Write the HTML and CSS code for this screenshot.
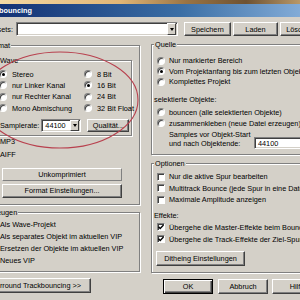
FILE: index.html
```html
<!DOCTYPE html>
<html lang="de">
<head>
    <meta charset="utf-8">
    <meta name="viewport" content="width=device-width, initial-scale=1.0">
    <link rel="stylesheet" href="styles.css">
    <title>Trackbouncing</title>
</head>
<body>
    <div class="desk"></div>
    <div class="window">
        <div class="titlebar"><span class="title">Trackbouncing</span></div>
        <div class="content">

            <!-- preset row -->
            <div class="presets">
                <span class="presets-label">Presets:</span>
                <div class="combo preset-combo"><span class="combo-text"></span><span class="drop"><span class="arrow"></span></span></div>
                <button type="button" class="btn btn-save">Speichern</button>
                <button type="button" class="btn btn-load">Laden</button>
                <button type="button" class="btn btn-del">Löschen</button>
            </div>

            <div class="cols">
                <div class="col-left">
                    <fieldset class="group format">
                        <legend>Format</legend>
                        <fieldset class="group wave">
                            <legend><span class="radio on"></span>Wave</legend>
                            <div class="wave-grid">
                                <label class="opt"><span class="radio on"></span>Stereo</label>
                                <label class="opt"><span class="radio"></span>8 Bit</label>
                                <label class="opt"><span class="radio"></span>nur Linker Kanal</label>
                                <label class="opt"><span class="radio on"></span>16 Bit</label>
                                <label class="opt"><span class="radio"></span>nur Rechter Kanal</label>
                                <label class="opt"><span class="radio"></span>24 Bit</label>
                                <label class="opt"><span class="radio"></span>Mono Abmischung</label>
                                <label class="opt"><span class="radio"></span>32 Bit Float</label>
                            </div>
                            <div class="rate-row">
                                <span class="rate-label">Samplerate:</span>
                                <div class="combo rate-combo"><span class="combo-text">44100</span><span class="drop"><span class="arrow"></span></span></div>
                                <button type="button" class="btn btn-quality">Qualität...</button>
                            </div>
                        </fieldset>
                        <label class="opt fmt fmt-mp3"><span class="radio"></span>MP3</label>
                        <label class="opt fmt fmt-aiff"><span class="radio"></span>AIFF</label>
                        <div class="flat-btn">Unkomprimiert</div>
                        <button type="button" class="btn btn-format">Format Einstellungen...</button>
                    </fieldset>

                    <fieldset class="group erzeugen">
                        <legend>Erzeugen</legend>
                        <div class="erz-list">
                            <label class="opt fmt"><span class="radio on"></span>Als Wave-Projekt</label>
                            <label class="opt fmt"><span class="radio"></span>Als separates Objekt im aktuellen VIP</label>
                            <label class="opt fmt"><span class="radio"></span>Ersetzen der Objekte im aktuellen VIP</label>
                            <label class="opt fmt"><span class="radio"></span>Neues VIP</label>
                        </div>
                    </fieldset>

                    <button type="button" class="btn btn-surround">Surround Trackbouncing &gt;&gt;</button>
                </div>

                <div class="col-right">
                    <fieldset class="group quelle">
                        <legend>Quelle</legend>
                        <div class="q-list">
                            <label class="opt qopt"><span class="radio"></span>Nur markierter Bereich</label>
                            <label class="opt qopt"><span class="radio on"></span>Vom Projektanfang bis zum letzten Objekt</label>
                            <label class="opt qopt"><span class="radio"></span>Komplettes Projekt</label>
                        </div>
                        <div class="sub-title">selektierte Objekte:</div>
                        <div class="sel-list">
                            <label class="opt sopt"><span class="radio"></span>bouncen (alle selektierten Objekte)</label>
                            <label class="opt sopt"><span class="radio"></span>zusammenkleben (neue Datei erzeugen)</label>
                        </div>
                        <div class="samples-row">
                            <span class="samples-label">Samples vor Objekt-Start<br>und nach Objektende:</span>
                            <div class="field">44100</div>
                        </div>
                    </fieldset>

                    <fieldset class="group optionen">
                        <legend>Optionen</legend>
                        <div class="o-list">
                            <label class="opt copt"><span class="check"></span>Nur die aktive Spur bearbeiten</label>
                            <label class="opt copt"><span class="check"></span>Multitrack Bounce (jede Spur in eine Datei)</label>
                            <label class="opt copt"><span class="check"></span>Maximale Amplitude anzeigen</label>
                        </div>
                        <div class="sub-title fx-title">Effekte:</div>
                        <div class="fx-list">
                            <label class="opt fopt"><span class="check"><svg width="6" height="6" viewBox="0 0 6 6"><polyline points="0.5,2.8 2.2,4.6 5.6,1" fill="none" stroke="#000" stroke-width="1.4"/></svg></span>Übergehe die Master-Effekte beim Bouncen</label>
                            <label class="opt fopt"><span class="check"><svg width="6" height="6" viewBox="0 0 6 6"><polyline points="0.5,2.8 2.2,4.6 5.6,1" fill="none" stroke="#000" stroke-width="1.4"/></svg></span>Übergehe die Track-Effekte der Ziel-Spur</label>
                        </div>
                        <button type="button" class="btn btn-dither">Ditheing Einstellungen</button>
                    </fieldset>

                    <div class="actions">
                        <button type="button" class="btn default">OK</button>
                        <button type="button" class="btn">Abbruch</button>
                        <button type="button" class="btn">Hilfe</button>
                    </div>
                </div>
            </div>
        </div>
    </div>

    <!-- red marker drawn over the screenshot -->
    <svg class="mark" width="300" height="300" viewBox="0 0 300 300">
        <ellipse cx="60" cy="100" rx="78" ry="48" fill="none" stroke="#b8404e" stroke-width="1.1"/>
    </svg>
</body>
</html>
```

FILE: styles.css
```css
* {box-sizing: border-box;}

body {
    margin: 0;
    width: 300px;
    height: 300px;
    overflow: hidden;
    position: relative;
    background-color: #d4d0c8;
    font-family: "Liberation Sans", Arial, sans-serif;
    font-size: 7.3px;
    line-height: 9px;
    color: #000;
    white-space: nowrap;
}

/* strip of the desktop above the window */
.desk {
    height: 4px;
    background: linear-gradient(to right, #f2d8a4, #e2b676 40%, #9a7444 62%, #6e5232 82%, #b89868);
}

.window {
    margin-left: -40px;
    width: 400px;
}

.titlebar {
    height: 13px;
    padding-left: 20px;
    display: flex;
    align-items: center;
    background: linear-gradient(to right, #0a246a, #3a6ea5 55%, #a6caf0);
}

.title {
    color: #fff;
    font-weight: bold;
}

.content {
    padding-top: 5px;
}

/* Buttons */
.btn {
    font: inherit;
    color: #000;
    background-color: #d4d0c8;
    height: 14px;
    padding: 0;
    border: 1px solid;
    border-color: #fff #404040 #404040 #fff;
    box-shadow: inset -1px -1px 0 #808080;
    cursor: pointer;
}

.btn.default {
    border-color: #000;
    box-shadow: inset 1px 1px 0 #fff, inset -1px -1px 0 #404040, inset -2px -2px 0 #808080;
}

.flat-btn {
    height: 13px;
    border: 1px solid;
    border-color: #fff #808080 #808080 #fff;
    text-align: center;
    line-height: 11px;
}

/* Combo boxes and fields */
.combo, .field {
    background-color: #fff;
    border: 1px solid;
    border-color: #808080 #fff #fff #808080;
    box-shadow: inset 1px 1px 0 #404040, inset -1px -1px 0 #d4d0c8;
    display: flex;
    align-items: center;
}

.combo-text {
    flex: 1;
    padding-left: 3px;
}

.drop {
    width: 9px;
    height: 100%;
    margin: 1px;
    background-color: #d4d0c8;
    border: 1px solid;
    border-color: #fff #404040 #404040 #fff;
    display: flex;
    align-items: center;
    justify-content: center;
}

.arrow {
    border-left: 2.5px solid transparent;
    border-right: 2.5px solid transparent;
    border-top: 3px solid #000;
}

.field {
    padding-left: 3px;
}

/* Presets row */
.presets {
    display: flex;
    align-items: center;
    height: 14px;
}

.presets-label {
    width: 53px;
    text-align: right;
}

.preset-combo {
    width: 162px;
    height: 14px;
    margin-left: 3px;
}

.btn-save { width: 47px; margin-left: 6px; }
.btn-load { width: 45px; margin-left: 2px; }
.btn-del { width: 40px; margin-left: 2px; }

/* Columns */
.cols {
    display: flex;
    margin-top: 3.5px;
    gap: 11px;
    padding-left: 12px;
}

.col-left {
    width: 168px;
    display: flex;
    flex-direction: column;
}

.col-right {
    width: 190px;
    display: flex;
    flex-direction: column;
}

/* Group boxes */
.group {
    margin: 0;
    padding: 0;
    min-width: 0;
    border: 1px solid #808080;
    box-shadow: 1px 1px 0 #fff, inset 1px 1px 0 #fff;
}

.group legend {
    padding: 0 1px;
    line-height: 9px;
    background-color: #d4d0c8;
}

/* radio and checkbox options */
.opt {
    display: flex;
    align-items: center;
    height: 11px;
}

.radio {
    flex: none;
    position: relative;
    width: 8px;
    height: 8px;
    margin-right: 4px;
    border-radius: 50%;
    background-color: #fff;
    border: 1px solid;
    border-color: #808080 #fff #fff #808080;
    box-shadow: inset 1px 1px 0 #404040;
}

.radio.on::after {
    content: "";
    position: absolute;
    left: 1.5px;
    top: 1.5px;
    width: 3px;
    height: 3px;
    border-radius: 50%;
    background-color: #000;
}

.check {
    flex: none;
    width: 8px;
    height: 8px;
    margin-right: 4px;
    background-color: #fff;
    border: 1px solid;
    border-color: #808080 #fff #fff #808080;
    box-shadow: inset 1px 1px 0 #404040;
    display: flex;
    align-items: center;
    justify-content: center;
}

/* Format group */
.format {
    margin-top: 1px;
    padding-bottom: 6px;
}

.format > legend { margin-left: 13px; }

.wave {
    margin: 6px 7px 0 12px;
    padding-bottom: 3px;
}

.wave > legend {
    margin-left: 3px;
    padding: 0;
    display: flex;
    align-items: center;
    height: 9px;
}

.wave > legend .radio { margin-right: 3px; }

.wave-grid {
    display: grid;
    grid-template-columns: 85px auto;
    grid-auto-rows: 11.3px;
    padding: 4px 0 0 13px;
}

.wave-grid .opt { height: 11.3px; }

.wave-grid .radio { margin-right: 5px; }

.rate-row {
    display: flex;
    align-items: center;
    height: 13px;
    margin-top: 5.3px;
    padding-left: 14px;
}

.rate-combo {
    width: 40px;
    height: 13px;
    margin-left: 2px;
}

.btn-quality {
    width: 42px;
    height: 13px;
    margin-left: 6px;
}

.fmt .radio { margin-right: 5px; }

.fmt-mp3, .erz-list .fmt { padding-left: 14px; }
.fmt-aiff { padding-left: 14px; margin-top: 2px; }
.fmt-mp3 { margin-top: 0.5px; }

.flat-btn {
    width: 120px;
    margin: 7.5px 0 0 29px;
}

.btn-format {
    width: 120px;
    margin: 3px 0 0 29px;
}

/* Erzeugen group */
.erzeugen {
    margin-top: 3.5px;
    padding-bottom: 5px;
}

.erzeugen > legend { margin-left: 12px; }

.erz-list { padding-top: 1.5px; }

.erz-list .opt { height: 11.8px; }

.btn-surround {
    width: 110px;
    height: 15px;
    margin: 6px 0 0 9px;
}

/* Quelle group */
.quelle { padding-bottom: 4.5px; }

.quelle > legend,
.optionen > legend { margin-left: 2px; }

.q-list { padding-top: 7px; }

.qopt { height: 10.5px; padding-left: 5px; }

.sub-title {
    height: 11px;
    line-height: 11px;
    margin-top: 6.5px;
    padding-left: 2px;
}

.sel-list { margin-top: 2px; }

.sopt { padding-left: 5px; }

.samples-row {
    display: flex;
    margin-top: 1px;
    padding-left: 17px;
}

.samples-label {
    width: 85px;
    line-height: 9px;
    padding-top: 0.5px;
}

.samples-row .field {
    width: 60px;
    height: 12px;
    margin-top: 7.5px;
}

/* Optionen group */
.optionen {
    margin-top: 4.5px;
    padding-bottom: 6px;
}

.o-list { padding-top: 3px; }

.copt { height: 11.5px; padding-left: 5px; }

.fx-title { margin-top: 4.5px; }

.fopt { height: 12px; padding-left: 5px; }

.btn-dither {
    width: 89px;
    height: 15px;
    margin: 6px 0 0 4px;
    align-self: flex-start;
}

/* OK / Abbruch / Hilfe */
.actions {
    display: flex;
    gap: 5px;
    margin-top: 5.5px;
    padding-left: 12px;
}

.actions .btn {
    width: 50px;
    height: 15px;
}

.actions .btn:last-child { margin-left: -1px; }

.mark {
    position: absolute;
    left: 0;
    top: 0;
    pointer-events: none;
}
```
